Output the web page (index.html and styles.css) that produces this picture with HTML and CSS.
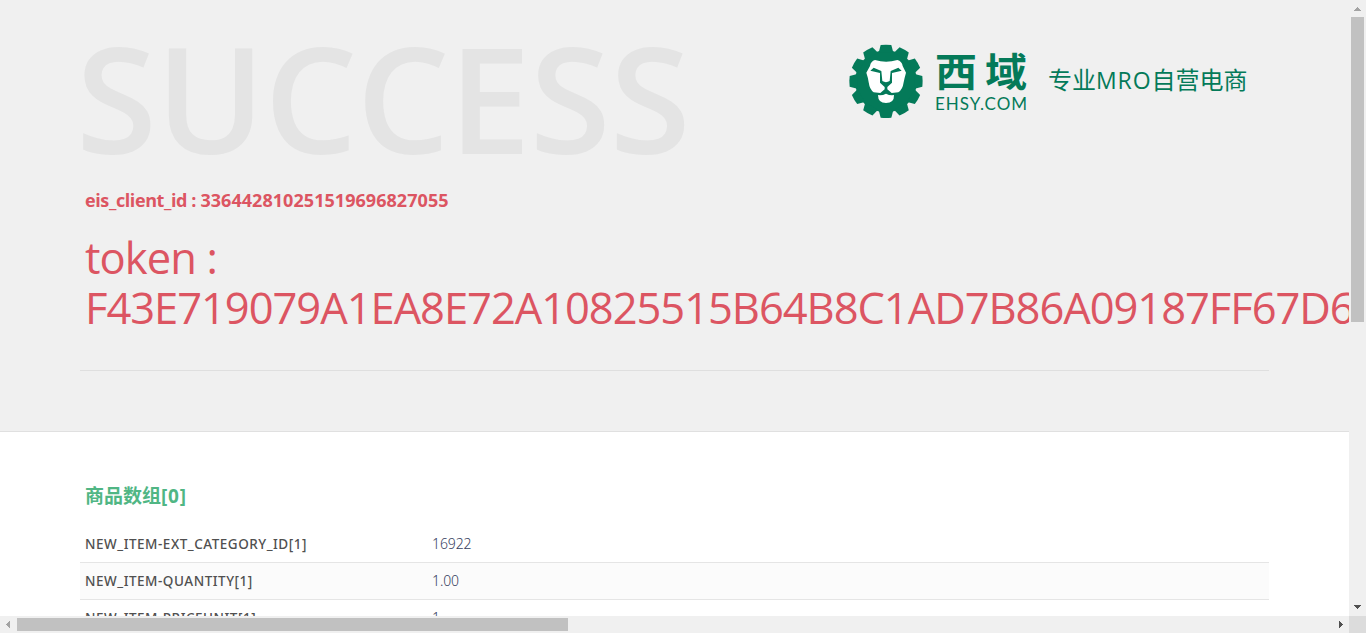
FILE: index.html
```html
<!DOCTYPE html>
<html lang="zh-CN">
<head>
<meta charset="utf-8">
<title>SUCCESS</title>
<link rel="stylesheet" href="styles.css">
</head>
<body>
<div class="window">
  <main class="page">
    <header class="summary">
      <div class="container">
        <div class="banner">
          <h1 class="status">SUCCESS</h1>
          <div class="brand">
            <svg class="lion" viewBox="0 0 240 240" aria-hidden="true">
              <defs><path id="tooth" d="M98 32 L104 9 Q120 7 136 9 L142 32Z"/></defs>
              <g fill="#047a59">
                <circle cx="120" cy="118" r="93"/>
                <use href="#tooth"/>
                <use href="#tooth" transform="rotate(30 120 118)"/>
                <use href="#tooth" transform="rotate(60 120 118)"/>
                <use href="#tooth" transform="rotate(90 120 118)"/>
                <use href="#tooth" transform="rotate(120 120 118)"/>
                <use href="#tooth" transform="rotate(150 120 118)"/>
                <use href="#tooth" transform="rotate(180 120 118)"/>
                <use href="#tooth" transform="rotate(210 120 118)"/>
                <use href="#tooth" transform="rotate(240 120 118)"/>
                <use href="#tooth" transform="rotate(270 120 118)"/>
                <use href="#tooth" transform="rotate(300 120 118)"/>
                <use href="#tooth" transform="rotate(330 120 118)"/>
              </g>
              <path fill="#fff" d="M87 54 Q120 64 154 54 Q168 58 170 72 L180 92 Q176 106 173 121 Q170 143 157 151 L137 153 L124 142 L124 135 L138 122 L138 93 L167 86 L157 77 L134 87 L131 117 Q120 124 109 117 L106 87 L83 77 L73 86 L102 93 L102 122 L116 135 L116 142 L103 153 L83 151 Q71 143 68 121 Q66 106 61 92 L72 72 Q74 58 87 54Z"/>
              <path fill="#fff" d="M96 159 Q108 161 120 155 Q132 161 144 159 Q145 183 120 183 Q96 183 96 159Z"/>
            </svg>
            <div class="wordmark">
              <div class="name">西域</div>
              <div class="domain">EHSY.COM</div>
            </div>
            <div class="slogan">专业<span class="mro">MRO</span>自营电商</div>
          </div>
        </div>
        <h3 class="client"><span class="label">eis_client_id : </span>336442810251519696827055</h3>
        <h2 class="token">token :<br><span class="code">F43E719079A1EA8E72A10825515B64B8C1AD7B86A09187FF67D6</span></h2>
        <hr class="rule">
      </div>
    </header>
    <section class="container items">
      <h3 class="group">商品数组<span class="index">[0]</span></h3>
      <div class="row"><span class="key">NEW_ITEM-EXT_CATEGORY_ID[1]</span><span class="val">16922</span></div>
      <div class="row alt"><span class="key">NEW_ITEM-QUANTITY[1]</span><span class="val">1.00</span></div>
      <div class="row"><span class="key">NEW_ITEM-PRICEUNIT[1]</span><span class="val">1</span></div>
    </section>
  </main>
  <div class="vbar">
    <svg class="arrow" viewBox="0 0 17 17" shape-rendering="crispEdges"><path fill="#a3a3a3" d="M5 11V10H6V9H7V8H8V7H9V8H10V9H11V10H12V11Z"/></svg>
    <div class="vthumb"></div>
    <svg class="arrow down" viewBox="0 0 17 17" shape-rendering="crispEdges"><path fill="#505050" d="M5 6H12V7H11V8H10V9H9V10H8V9H7V8H6V7H5Z"/></svg>
  </div>
  <div class="hbar">
    <svg class="arrow" viewBox="0 0 17 17" shape-rendering="crispEdges"><path fill="#a3a3a3" d="M10 5V12H9V11H8V10H7V9H6V8H7V7H8V6H9V5Z"/></svg>
    <div class="hthumb"></div>
    <svg class="arrow right" viewBox="0 0 17 17" shape-rendering="crispEdges"><path fill="#505050" d="M7 5H8V6H9V7H10V8H11V9H10V10H9V11H8V12H7Z"/></svg>
  </div>
  <div class="corner"></div>
</div>
</body>
</html>
```

FILE: styles.css
```css
* { box-sizing: border-box; }
html, body { margin: 0; height: 100%; overflow: hidden; }
body { font-family: "Open Sans", "Noto Sans CJK SC", sans-serif; background: #fff; }
h1, h2, h3 { margin: 0; white-space: nowrap; }

.window {
  display: grid;
  grid-template-columns: 1349px 17px;
  grid-template-rows: 616px 17px;
  width: 1366px;
  height: 633px;
}
.page { overflow: hidden; min-width: 0; background: #fff; }
.container { width: 1189px; margin-left: 80px; }
.summary { height: 432px; background: #f0f0f0; border-bottom: 1px solid #e0e0e0; }

.banner { display: flex; justify-content: space-between; height: 184px; }
.status {
  height: 184px;
  margin-left: -4px;
  font-size: 147px;
  line-height: 195px;
  font-weight: 600;
  letter-spacing: -0.9px;
  color: #e4e4e4;
}
.brand { display: flex; width: 423px; height: 84px; margin-top: 42px; color: #047a59; }
.lion { width: 80px; height: 80px; flex: none; }
.wordmark { width: 110px; padding-left: 9px; white-space: nowrap; }
.name {
  height: 50px;
  font: 700 42px/58px "Noto Sans CJK SC", sans-serif;
  letter-spacing: 8px;
  transform: scaleY(0.92);
  transform-origin: 0 10px;
}
.domain { font: 17px/24px Lato, sans-serif; letter-spacing: 1px; }
.slogan {
  padding-left: 12px;
  font: 24px/73px "Noto Sans CJK SC", sans-serif;
  white-space: nowrap;
}
.mro { font-family: "Open Sans", sans-serif; font-size: 23px; letter-spacing: 0.9px; }

.client { height: 49px; padding-left: 5px; font-size: 18px; line-height: 33px; font-weight: 700; letter-spacing: 0.05px; color: #dc5562; }
.label { letter-spacing: -0.4px; }
.token { height: 137px; padding-left: 5px; font-size: 43.5px; line-height: 50px; font-weight: 400; letter-spacing: -0.9px; color: #dc5562; }
.code { letter-spacing: -1.04px; }
.rule { height: 1px; margin: 0; border: 0; background: #dfdfdf; }

.items { padding-top: 49px; }
.group { height: 45px; padding-left: 5px; font-family: "Noto Sans", "Noto Sans CJK SC", sans-serif; font-size: 19px; line-height: 30px; font-weight: 700; color: #50b684; }
.index { letter-spacing: 0.8px; }
.row {
  display: grid;
  grid-template-columns: 347px 1fr;
  height: 37px;
  padding-left: 5px;
  border-bottom: 1px solid #e5e5e5;
  font-family: "Noto Sans", sans-serif;
  font-size: 13.5px;
  line-height: 37px;
  color: #505050;
}
.alt { background: #fbfbfb; }
.key { font-weight: 500; letter-spacing: 0.52px; }
.val { font-size: 14px; font-weight: 300; line-height: 36px; letter-spacing: -0.1px; color: #36405e; }

.vbar { display: flex; flex-direction: column; align-items: center; background: #f0f0f0; }
.hbar { display: flex; align-items: center; background: #f0f0f0; }
.arrow { display: block; width: 17px; height: 17px; flex: none; }
.vthumb { width: 13px; height: 305px; background: #c1c1c1; }
.hthumb { width: 551px; height: 13px; background: #c1c1c1; }
.down { margin-top: auto; }
.right { margin-left: auto; }
.corner { background: #dcdcdc; }
```
